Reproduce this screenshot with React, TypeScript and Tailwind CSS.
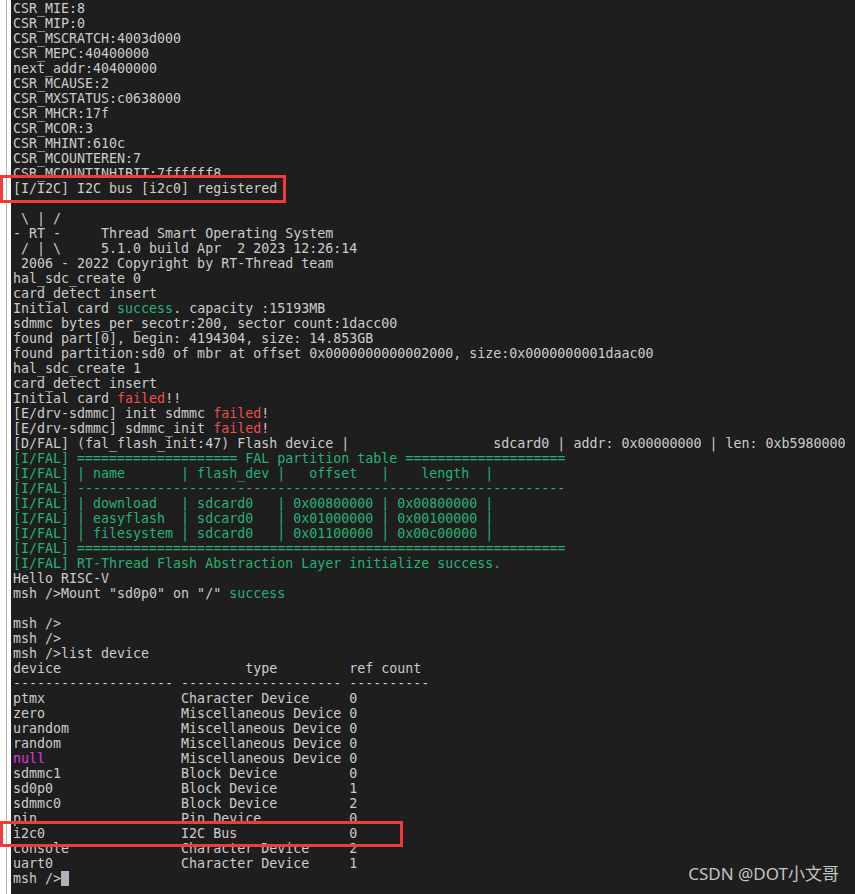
type Seg = [string, string?];

const G = "text-[#23b374]";
const R = "text-[#f14c4c]";
const M = "text-[#e038e0]";

const fal = (s: string): Seg[] => [["[I/FAL] " + s, G]];

const lines: Seg[][] = [
  [["CSR_MIE:8"]],
  [["CSR_MIP:0"]],
  [["CSR_MSCRATCH:4003d000"]],
  [["CSR_MEPC:40400000"]],
  [["next_addr:40400000"]],
  [["CSR_MCAUSE:2"]],
  [["CSR_MXSTATUS:c0638000"]],
  [["CSR_MHCR:17f"]],
  [["CSR_MCOR:3"]],
  [["CSR_MHINT:610c"]],
  [["CSR_MCOUNTEREN:7"]],
  [["CSR_MCOUNTINHIBIT:7ffffff8"]],
  [["[I/I2C] I2C bus [i2c0] registered"]],
  [[""]],
  [[" \\ | /"]],
  [["- RT -     Thread Smart Operating System"]],
  [[" / | \\     5.1.0 build Apr  2 2023 12:26:14"]],
  [[" 2006 - 2022 Copyright by RT-Thread team"]],
  [["hal_sdc_create 0"]],
  [["card_detect insert"]],
  [["Initial card "], ["success", G], [". capacity :15193MB"]],
  [["sdmmc bytes_per_secotr:200, sector count:1dacc00"]],
  [["found part[0], begin: 4194304, size: 14.853GB"]],
  [["found partition:sd0 of mbr at offset 0x0000000000002000, size:0x0000000001daac00"]],
  [["hal_sdc_create 1"]],
  [["card_detect insert"]],
  [["Initial card "], ["failed", R], ["!!"]],
  [["[E/drv-sdmmc] init sdmmc "], ["failed", R], ["!"]],
  [["[E/drv-sdmmc] sdmmc_init "], ["failed", R], ["!"]],
  [["[D/FAL] (fal_flash_init:47) Flash device |                  sdcard0 | addr: 0x00000000 | len: 0xb5980000"]],
  fal("==================== FAL partition table ===================="),
  fal("| name       | flash_dev |   offset   |    length  |"),
  fal("-------------------------------------------------------------"),
  fal("| download   | sdcard0   | 0x00800000 | 0x00800000 |"),
  fal("| easyflash  | sdcard0   | 0x01000000 | 0x00100000 |"),
  fal("| filesystem | sdcard0   | 0x01100000 | 0x00c00000 |"),
  fal("============================================================="),
  fal("RT-Thread Flash Abstraction Layer initialize success."),
  [["Hello RISC-V"]],
  [['msh />Mount "sd0p0" on "/" '], ["success", G]],
  [[""]],
  [["msh />"]],
  [["msh />"]],
  [["msh />list device"]],
  [["device                       type         ref count"]],
  [["-------------------- -------------------- ----------"]],
  [["ptmx                 Character Device     0"]],
  [["zero                 Miscellaneous Device 0"]],
  [["urandom              Miscellaneous Device 0"]],
  [["random               Miscellaneous Device 0"]],
  [["null", M], ["                 Miscellaneous Device 0"]],
  [["sdmmc1               Block Device         0"]],
  [["sd0p0                Block Device         1"]],
  [["sdmmc0               Block Device         2"]],
  [["pin                  Pin Device           0"]],
  [["i2c0                 I2C Bus              0"]],
  [["console              Character Device     2"]],
  [["uart0                Character Device     1"]],
];

export default function App() {
  return (
    <div className="relative flex h-[894px] w-[855px] overflow-hidden bg-white">
      <div className="w-[11px] shrink-0 bg-white">
        <div className="ml-[6px] h-full w-px bg-[#b4b4b4]" />
      </div>
      <div
        className="flex-1 bg-[#1e1e1e] pl-[2px] pt-[1px] text-[13.3px] leading-[15px] text-[#cccccc] whitespace-pre"
        style={{ fontFamily: '"DejaVu Sans Mono", "Liberation Mono", monospace' }}
      >
        {lines.map((segs, i) => (
          <div key={i} className="h-[15px]">
            {segs.map(([t, c], j) => (
              <span key={j} className={c}>
                {t}
              </span>
            ))}
          </div>
        ))}
        <div className="flex h-[15px] items-center">
          <span>msh /&gt;</span>
          <span className="h-[15px] w-[8px] bg-[#b0b0c0]" />
        </div>
      </div>

      <div className="absolute left-0 top-[175px] h-[28px] w-[286px] border-[3px] border-[#f23a3a]" />
      <div className="absolute left-0 top-[821px] h-[26px] w-[403px] border-[3px] border-[#f23a3a]" />

      <div
        className="absolute right-[16px] bottom-[8px] text-[17px] text-[#c4c4c4]"
        style={{ fontFamily: '"Noto Sans", "Noto Sans CJK SC", sans-serif' }}
      >
        CSDN @DOT小文哥
      </div>
    </div>
  );
}
